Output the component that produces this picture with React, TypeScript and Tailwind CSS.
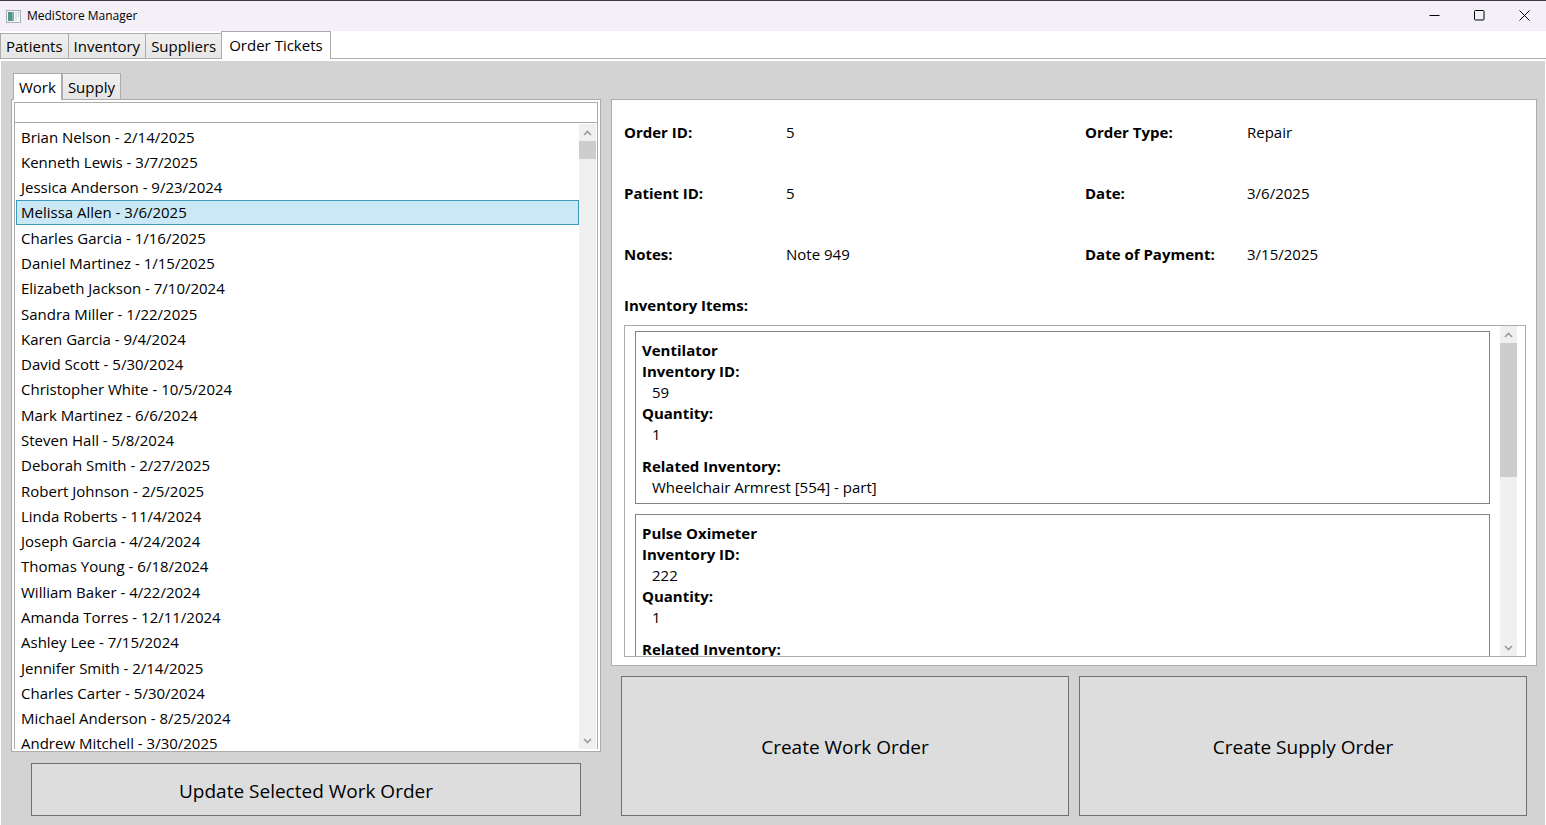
import { useState } from "react";

const orders = [
  "Brian Nelson - 2/14/2025",
  "Kenneth Lewis - 3/7/2025",
  "Jessica Anderson - 9/23/2024",
  "Melissa Allen - 3/6/2025",
  "Charles Garcia - 1/16/2025",
  "Daniel Martinez - 1/15/2025",
  "Elizabeth Jackson - 7/10/2024",
  "Sandra Miller - 1/22/2025",
  "Karen Garcia - 9/4/2024",
  "David Scott - 5/30/2024",
  "Christopher White - 10/5/2024",
  "Mark Martinez - 6/6/2024",
  "Steven Hall - 5/8/2024",
  "Deborah Smith - 2/27/2025",
  "Robert Johnson - 2/5/2025",
  "Linda Roberts - 11/4/2024",
  "Joseph Garcia - 4/24/2024",
  "Thomas Young - 6/18/2024",
  "William Baker - 4/22/2024",
  "Amanda Torres - 12/11/2024",
  "Ashley Lee - 7/15/2024",
  "Jennifer Smith - 2/14/2025",
  "Charles Carter - 5/30/2024",
  "Michael Anderson - 8/25/2024",
  "Andrew Mitchell - 3/30/2025",
];

const fields = [
  ["Order ID:", "5"],
  ["Order Type:", "Repair"],
  ["Patient ID:", "5"],
  ["Date:", "3/6/2025"],
  ["Notes:", "Note 949"],
  ["Date of Payment:", "3/15/2025"],
];

const items = [
  { name: "Ventilator", id: "59", quantity: "1", related: "Wheelchair Armrest [554] - part]" },
  { name: "Pulse Oximeter", id: "222", quantity: "1", related: "" },
];

function Chevron({ down = false }: { down?: boolean }) {
  return (
    <svg width="9" height="6" viewBox="0 0 9 6" fill="none" stroke="#9a9a9a" strokeWidth="1.6" aria-hidden="true">
      <path d={down ? "M1 1L4.5 4.5L8 1" : "M1 5L4.5 1.5L8 5"} />
    </svg>
  );
}

function ScrollBar({ thumb }: { thumb: string }) {
  return (
    <div className="flex w-[17px] shrink-0 flex-col bg-[#f0f0f0]">
      <button aria-label="Scroll up" className="flex h-[17px] shrink-0 items-center justify-center">
        <Chevron />
      </button>
      <div className="min-h-0 flex-1">
        <div className={`bg-[#cdcdcd] ${thumb}`} />
      </div>
      <button aria-label="Scroll down" className="flex h-[17px] shrink-0 items-center justify-center">
        <Chevron down />
      </button>
    </div>
  );
}

function TitleBar() {
  return (
    <header className="flex h-[31px] shrink-0 items-center border-t border-[#3f3a45] bg-[#f3f0f8] pl-1.5">
      <svg width="15" height="13" viewBox="0 0 15 13" aria-hidden="true">
        <rect x="0.5" y="0.5" width="14" height="12" fill="#f4f6f7" stroke="#a9b0b5" />
        <rect x="2" y="2" width="6" height="9" fill="#4f958c" />
        <rect x="6" y="2" width="2" height="9" fill="#7fb0ae" />
        <rect x="9" y="2" width="2" height="9" fill="#dfe7ea" />
        <rect x="12" y="2" width="1" height="5" fill="#c9d2d6" />
      </svg>
      <h1 className="ml-1.5 text-[12px] leading-4">MediStore Manager</h1>
      <div className="ml-auto flex h-full pb-0.5">
        <button aria-label="Minimize" className="flex w-[46px] items-center justify-center">
          <svg width="11" height="11" viewBox="0 0 11 11" stroke="#000" aria-hidden="true">
            <path d="M0.5 5.5H10.5" />
          </svg>
        </button>
        <button aria-label="Maximize" className="flex w-[45px] items-center justify-center">
          <svg width="11" height="11" viewBox="0 0 11 11" fill="none" stroke="#000" aria-hidden="true">
            <rect x="0.5" y="0.5" width="9.5" height="9.5" rx="1" />
          </svg>
        </button>
        <button aria-label="Close" className="flex w-[44px] items-center justify-center">
          <svg width="11" height="11" viewBox="0 0 11 11" stroke="#000" aria-hidden="true">
            <path d="M0.5 0.5L10.5 10.5M10.5 0.5L0.5 10.5" />
          </svg>
        </button>
      </div>
    </header>
  );
}

const idleTab = "-mr-px border border-b-0 border-[#acacac] bg-linear-to-b from-[#f0f0f0] to-[#e5e5e5]";

export default function App() {
  const [selected, setSelected] = useState(3);

  return (
    <div className="flex h-screen flex-col overflow-hidden bg-white font-['Open_Sans',sans-serif] text-[15px] leading-[21px] text-black">
      <TitleBar />

      <nav className="flex h-7 shrink-0 items-end border-b border-[#acacac]" role="tablist" aria-label="Sections">
        <button role="tab" className={`h-[25px] px-[5px] ${idleTab}`}>Patients</button>
        <button role="tab" className={`h-[25px] px-[5px] ${idleTab}`}>Inventory</button>
        <button role="tab" className={`h-[25px] px-[5px] ${idleTab}`}>Suppliers</button>
        <button role="tab" aria-selected="true" className="-mb-px h-7 border border-b-0 border-[#acacac] bg-white px-[7px]">
          Order Tickets
        </button>
      </nav>

      <main className="mx-px mt-0.5 grid min-h-0 flex-1 grid-cols-[590fr_926fr] gap-2.5 bg-[#d3d3d3] pt-3 pr-2 pb-[9px] pl-2.5">
        <section className="flex min-h-0 min-w-0 flex-col">
          <div className="ml-0.5 flex h-[26px] shrink-0 items-end" role="tablist" aria-label="Order kind">
            <button role="tab" aria-selected="true" className="z-10 -mb-px h-[27px] border border-b-0 border-[#acacac] bg-white px-[5px]">
              Work
            </button>
            <button role="tab" className={`h-[26px] px-[5px] pt-0.5 ${idleTab}`}>Supply</button>
          </div>
          <div className="flex min-h-0 flex-1 flex-col border border-[#acacac] bg-white p-0.5">
            <input aria-label="Search orders" className="h-[21px] w-full shrink-0 border border-[#acacac] px-1 outline-none" />
            <div className="flex min-h-0 flex-1 overflow-hidden border-x border-[#acacac] pt-px pr-px pl-px">
              <ul className="grid h-[632px] min-w-0 flex-1 auto-rows-fr" role="listbox" aria-label="Work orders">
                {orders.map((order, i) => (
                  <li
                    key={order}
                    role="option"
                    aria-selected={i === selected}
                    onClick={() => setSelected(i)}
                    className={`flex items-center border px-1 pt-px ${
                      i === selected ? "border-[#3c98bd] bg-[#cbe8f6]" : "border-transparent"
                    }`}
                  >
                    {order}
                  </li>
                ))}
              </ul>
              <ScrollBar thumb="h-[18px]" />
            </div>
          </div>
          <button className="mx-5 mt-[11px] h-[53px] shrink-0 border border-[#707070] bg-[#dddddd] pt-[3px] text-[19px]">
            Update Selected Work Order
          </button>
        </section>

        <section className="flex min-h-0 min-w-0 flex-col pt-[26px]">
          <div className="flex min-h-0 flex-1 flex-col border border-[#acacac] bg-white px-3 pt-0.5 pb-2 pr-2.5">
            <dl className="grid shrink-0 grid-cols-[162fr_299fr_162fr_279fr]">
              {fields.map(([label, value]) => (
                <div key={label} className="col-span-2 grid h-[61px] grid-cols-subgrid items-center">
                  <dt className="font-bold">{label}</dt>
                  <dd>{value}</dd>
                </div>
              ))}
            </dl>
            <h2 className="mt-2.5 mb-[9px] shrink-0 font-bold">Inventory Items:</h2>
            <div className="flex min-h-0 flex-1 overflow-hidden border border-[#acacac] pr-2 pl-2.5">
              <ul className="mr-2.5 min-w-0 flex-1 pt-[5px]">
                {items.map((item) => (
                  <li key={item.name} className="mb-2.5 border border-[#828282] px-1.5 pt-2 pb-[5px]">
                    <h3 className="font-bold">{item.name}</h3>
                    <p className="font-bold">Inventory ID:</p>
                    <p className="pl-2.5">{item.id}</p>
                    <p className="font-bold">Quantity:</p>
                    <p className="pl-2.5">{item.quantity}</p>
                    <p className="mt-[11px] font-bold">Related Inventory:</p>
                    <p className="h-[21px] pl-2.5">{item.related}</p>
                  </li>
                ))}
              </ul>
              <ScrollBar thumb="h-[134px]" />
            </div>
          </div>
          <div className="mx-2.5 mt-2.5 grid h-[140px] shrink-0 grid-cols-2 gap-2.5 text-[19px]">
            <button className="border border-[#707070] bg-[#dddddd] pt-[3px]">Create Work Order</button>
            <button className="border border-[#707070] bg-[#dddddd] pt-[3px]">Create Supply Order</button>
          </div>
        </section>
      </main>
    </div>
  );
}
